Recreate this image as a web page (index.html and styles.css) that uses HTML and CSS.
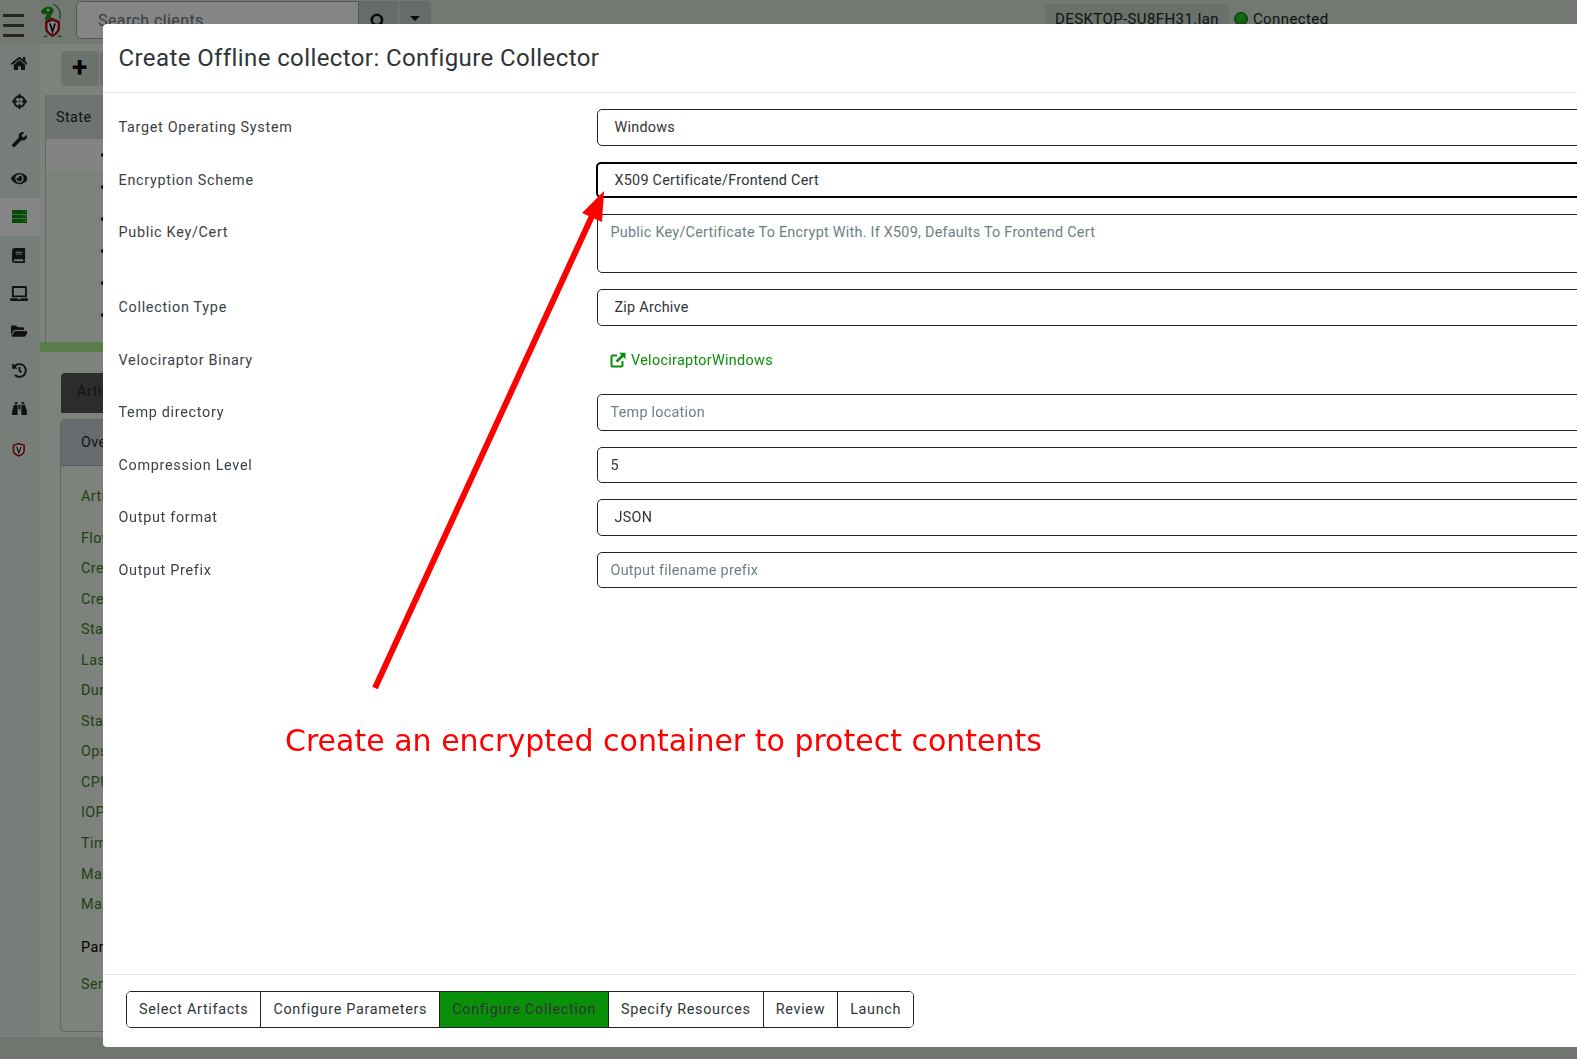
FILE: index.html
```html
<!DOCTYPE html>
<html lang="en">
<head>
    <meta charset="UTF-8">
    <title>Create Offline collector</title>
    <link rel="stylesheet" href="styles.css">
</head>
<body>
    <header class="topbar">
        <div class="burger"><span></span><span></span><span></span></div>
        <svg class="logo" viewBox="0 0 22 36">
            <path d="M13 1c5 2 8 7 7 15" fill="none" stroke="#0f8a0f" stroke-width="1.200"/>
            <path d="M1 9c1-4 6-6 10-5 3 1 3 4 2 6-1 1-2 2-2 4 1 1 2 2 2 3H5c0-3 1-5 2-6-3 1-5 0-6-2z" fill="#1c9a1c"/>
            <circle cx="8" cy="7" r="1.300" fill="#fff"/>
            <path d="M12.500 15l7.500 3v7c0 4-3.500 7-7.500 9-4-2-7.500-5-7.500-9v-7z" fill="#a8141a"/>
            <path d="M12.500 18l5 2v5c0 3-2.500 5-5 6.300-2.500-1.300-5-3.300-5-6.300v-5z" fill="#fff"/>
            <path d="M10 20.500l2.500 8 2.500-8" fill="none" stroke="#111" stroke-width="1.800"/>
            <path d="M3 34l3-2 2 2zM17 34l3-2 2 2z" fill="#1c9a1c"/>
        </svg>
        <div class="search">
            <div class="search-input">Search clients</div>
            <div class="search-btn">
                <svg viewBox="0 0 16 16"><circle cx="6.500" cy="6.500" r="4.800" fill="none" stroke="#111" stroke-width="2.400"/><path d="M10 10l5 5" stroke="#111" stroke-width="2.800"/></svg>
            </div>
            <div class="search-drop"><i></i></div>
        </div>
        <div class="status">
            <span class="host">DESKTOP-SU8FH31.lan</span>
            <span class="dot"></span>
            <span>Connected</span>
        </div>
    </header>

    <div class="page">
        <nav class="sidebar">
            <a><svg viewBox="0 0 576 512"><path d="M280 148L96 300v164c0 9 7 16 16 16l112-.3c9 0 16-7 16-16V368c0-9 7-16 16-16h64c9 0 16 7 16 16v96c0 9 7 16 16 16l112 .3c9 0 16-7 16-16V300L296 148c-4-3-12-3-16 0zM572 251l-84-69V44c0-7-5-12-12-12h-56c-7 0-12 5-12 12v72l-89-74c-18-14-43-14-61 0L4 251c-5 4-6 12-2 17l26 31c4 5 12 6 17 2L280 107c4-3 12-3 16 0l235 194c5 4 13 3 17-2l26-31c4-5 3-13-2-17z"/></svg></a>
            <a><svg viewBox="0 0 512 512"><path fill-rule="evenodd" d="M500 224h-30C456 138 374 56 288 42V12c0-7-5-12-12-12h-40c-7 0-12 5-12 12v30C138 56 56 138 42 224H12c-7 0-12 5-12 12v40c0 7 5 12 12 12h30c14 86 96 168 182 182v30c0 7 5 12 12 12h40c7 0 12-5 12-12v-30c86-14 168-96 182-182h30c7 0 12-5 12-12v-40c0-7-5-12-12-12zM288 404v-44c0-7-5-12-12-12h-40c-7 0-12 5-12 12v44c-51-12-96-57-108-116h44c7 0 12-5 12-12v-40c0-7-5-12-12-12h-44c12-59 57-104 108-116v44c0 7 5 12 12 12h40c7 0 12-5 12-12v-44c51 12 96 57 108 116h-44c-7 0-12 5-12 12v40c0 7 5 12 12 12h44c-12 59-57 104-108 116zM288 256a32 32 0 1 1-64 0 32 32 0 0 1 64 0z"/></svg></a>
            <a><svg viewBox="0 0 512 512"><path d="M507 109c-2-9-13-12-19-5l-74 74-68-11-11-68 74-74c7-7 3-17-6-19-48-12-100 1-137 38-40 40-50 98-31 147L20 406c-25 25-25 65 0 90s65 25 90 0l215-215c50 19 108 8 147-31 38-38 50-90 35-131z"/></svg></a>
            <a><svg viewBox="0 0 576 512"><path d="M572 241C518 135 410 64 288 64S58 135 4 241a32 32 0 0 0 0 30c54 106 162 177 284 177s230-71 284-177a32 32 0 0 0 0-30zM288 400a144 144 0 1 1 0-288 144 144 0 0 1 0 288zm0-240a95 95 0 0 0-25 4 48 48 0 0 1-67 67 96 96 0 1 0 92-71z"/></svg></a>
            <a class="active"><svg viewBox="0 0 512 512"><path class="green" d="M0 32h512v136H0zM0 188h512v136H0zM0 344h512v136H0z"/><path fill="#9fd09f" d="M390 64h36v40h-36zM450 64h36v40h-36zM390 220h36v40h-36zM450 220h36v40h-36zM390 376h36v40h-36zM450 376h36v40h-36z"/></svg></a>
            <a><svg viewBox="0 0 448 512"><path d="M448 360V24c0-13-11-24-24-24H96C43 0 0 43 0 96v320c0 53 43 96 96 96h328c13 0 24-11 24-24v-16c0-8-4-14-9-19-4-15-4-59 0-73 5-5 9-11 9-20zM128 134c0-3 3-6 6-6h212c3 0 6 3 6 6v20c0 3-3 6-6 6H134c-3 0-6-3-6-6v-20zm0 64c0-3 3-6 6-6h212c3 0 6 3 6 6v20c0 3-3 6-6 6H134c-3 0-6-3-6-6v-20zm253 250H96c-18 0-32-14-32-32s14-32 32-32h285c-2 17-2 47 0 64z"/></svg></a>
            <a><svg viewBox="0 0 640 512"><path d="M624 416H381c-1 20-15 32-33 32h-61c-18 0-32-17-32-32H16c-9 0-16 7-16 16v16c0 35 29 64 64 64h512c35 0 64-29 64-64v-16c0-9-7-16-16-16zM576 48c0-26-22-48-48-48H112C86 0 64 22 64 48v336h512V48zm-64 272H128V64h384v256z"/></svg></a>
            <a><svg viewBox="0 0 576 512"><path d="M573 279l-72 123c-12 19-35 30-55 30H48c-19 0-30-20-21-36l73-123c12-20 34-31 55-31h398c18 0 30 21 20 37zM155 208h293v-48c0-26-21-48-48-48H240l-64-64H48C21 48 0 69 0 96v278l69-119c18-29 51-47 86-47z"/></svg></a>
            <a><svg viewBox="0 0 512 512"><path d="M504 255c0 137-111 249-248 249-64 0-122-24-166-64-5-5-6-13-1-18l28-28c5-4 12-5 17-1 32 28 75 47 122 47 101 0 184-82 184-185S357 71 256 71c-51 0-96 21-130 54l51 51c8 8 2 21-8 21H17c-7 0-12-5-12-12V33c0-11 13-16 21-9l46 47C117 34 183 8 256 8c137 0 248 110 248 247zM325 334l10-13c7-10 5-24-5-31l-42-33V150c0-13-11-24-24-24h-16c-13 0-24 11-24 24v130l67 52c11 8 26 6 34 2z"/></svg></a>
            <a><svg viewBox="0 0 512 512"><path d="M416 48c0-9-7-16-16-16h-64c-9 0-16 7-16 16v48h96V48zM96 48c0-9 7-16 16-16h64c9 0 16 7 16 16v48H96V48zM0 416c0-40 8-90 22-140 14-50 42-100 42-148h128v336c0 9-7 16-16 16H16c-9 0-16-7-16-16v-48zm512 0c0-40-8-90-22-140-14-50-42-100-42-148H320v336c0 9 7 16 16 16h160c9 0 16-7 16-16v-48zM224 128h64v160h-64z"/></svg></a>
            <a class="shield"><svg viewBox="0 0 20 22"><path d="M10 1l9 3v8c0 5-4 8-9 9.500C5 20 1 17 1 12V4z" fill="#b01116"/><path d="M10 3.500l6.500 2v6.500c0 3.500-3 6-6.500 7-3.500-1-6.500-3.500-6.500-7V5.500z" fill="#fff"/><path d="M6.800 7l3.200 9 3.200-9" fill="none" stroke="#111" stroke-width="1.600"/></svg></a>
        </nav>

        <main class="content">
            <div class="toolbar"><div class="add-btn">+</div><div class="add-btn"></div></div>
            <div class="flow-table">
                <div class="table-head">State</div>
                <div class="table-row selected"><i></i></div>
                <div class="table-row"><i></i></div>
                <div class="table-row"><i></i></div>
                <div class="table-row"><i></i></div>
                <div class="table-row"><i></i></div>
                <div class="table-row"><i></i></div>
            </div>
            <div class="splitter"></div>
            <div class="tabs"><div class="tab">Artifact Collection</div></div>
            <section class="card">
                <div class="card-head">Overview</div>
                <dl class="facts">
                    <dt class="first">Artifact Names</dt>
                    <dt>Flow ID</dt>
                    <dt>Creator</dt>
                    <dt>Create Time</dt>
                    <dt>Start Time</dt>
                    <dt>Last Active</dt>
                    <dt>Duration</dt>
                    <dt>State</dt>
                    <dt>Ops/Sec</dt>
                    <dt>CPU Limit</dt>
                    <dt>IOPS Limit</dt>
                    <dt>Timeout</dt>
                    <dt>Max Rows</dt>
                    <dt>Max Bytes</dt>
                    <dt class="params">Parameters</dt>
                    <dt class="last">Server.Audit</dt>
                </dl>
            </section>
        </main>
    </div>

    <div class="backdrop"></div>

    <div class="modal">
        <div class="modal-header">Create Offline collector: Configure Collector</div>
        <div class="modal-body">
            <div class="form-row">
                <label>Target Operating System</label>
                <div class="control select">Windows</div>
            </div>
            <div class="form-row">
                <label>Encryption Scheme</label>
                <div class="control select focused">X509 Certificate/Frontend Cert</div>
            </div>
            <div class="form-row">
                <label>Public Key/Cert</label>
                <div class="control textarea">Public Key/Certificate To Encrypt With. If X509, Defaults To Frontend Cert</div>
            </div>
            <div class="form-row">
                <label>Collection Type</label>
                <div class="control select">Zip Archive</div>
            </div>
            <div class="form-row">
                <label>Velociraptor Binary</label>
                <a class="binary-link">
                    <svg viewBox="0 0 16 16"><path d="M7 3.500H2.500A1 1 0 0 0 1.500 4.500v9a1 1 0 0 0 1 1H11.500a1 1 0 0 0 1-1V9" fill="none" stroke="#0a8f0a" stroke-width="2"/><path d="M9 .7H15.500V7.200L13.200 4.900 7.500 10.600 5.600 8.700 11.300 3z" fill="#0a8f0a"/></svg>
                    VelociraptorWindows
                </a>
            </div>
            <div class="form-row">
                <label>Temp directory</label>
                <div class="control placeholder">Temp location</div>
            </div>
            <div class="form-row">
                <label>Compression Level</label>
                <div class="control">5</div>
            </div>
            <div class="form-row">
                <label>Output format</label>
                <div class="control select">JSON</div>
            </div>
            <div class="form-row">
                <label>Output Prefix</label>
                <div class="control placeholder">Output filename prefix</div>
            </div>
        </div>
        <div class="modal-footer">
            <div class="stepper">
                <button>Select Artifacts</button>
                <button>Configure Parameters</button>
                <button class="current">Configure Collection</button>
                <button>Specify Resources</button>
                <button>Review</button>
                <button>Launch</button>
            </div>
        </div>
    </div>

    <svg class="arrow" viewBox="0 0 1577 1059">
        <line x1="375" y1="688" x2="592" y2="216" stroke="#ff0000" stroke-width="6"/>
        <polygon points="604,191 602,222 582,213" fill="#ff0000"/>
    </svg>
    <div class="callout">Create an encrypted container to protect contents</div>
</body>
</html>
```

FILE: styles.css
```css
* {
    box-sizing: border-box;
}
html, body {
    height: 100%;
}
body {
    margin: 0;
    overflow: hidden;
    background-color: #d7e1d7;
    color: #212529;
    font-family: 'Roboto', sans-serif;
    font-size: 14.4px;
    letter-spacing: 0.4px;
}

/* page under the dialog */
.topbar {
    height: 44px;
    display: flex;
    align-items: flex-start;
    background-color: #dce6dc;
}
.burger {
    width: 40px;
    padding: 14px 16px 0 3px;
    display: flex;
    flex-direction: column;
    gap: 7px;
}
.burger span {
    height: 3px;
    background-color: #4a4a4a;
}
.logo {
    width: 22px;
    height: 36px;
    margin-top: 3px;
}
.search {
    display: flex;
    margin: 1px 0 0 14px;
    height: 38px;
}
.search-input {
    width: 283px;
    padding: 9px 21px;
    border: 1px solid #9aa;
    border-radius: 5px 0 0 5px;
    background-color: #fff;
    font-size: 16px;
    color: #6c757d;
}
.search-btn {
    width: 40px;
    background-color: #c8d0c8;
    border-right: 1px solid #e2ebe2;
    padding: 12px 11px;
}
.search-btn svg {
    width: 17px;
    height: 17px;
    display: block;
}
.search-drop {
    width: 32px;
    background-color: #c8d0c8;
    border-radius: 0 5px 5px 0;
    padding-top: 15px;
    padding-left: 11px;
}
.search-drop i {
    display: block;
    width: 0;
    border-left: 5px solid transparent;
    border-right: 5px solid transparent;
    border-top: 5px solid #111;
}
.status {
    display: flex;
    align-items: center;
    margin: 4px 0 0 614px;
    height: 30px;
    font-size: 15px;
    letter-spacing: 0.4px;
}
.host {
    padding: 0 10px;
    height: 30px;
    line-height: 30px;
    background-color: #ccd6cc;
    border-radius: 4px;
}
.dot {
    width: 14px;
    height: 14px;
    margin: 0 5px;
    border-radius: 50%;
    background: radial-gradient(circle at 50% 35%, #2fdc2f, #0a8f0a);
    border: 1px solid #0a6a0a;
}
.page {
    display: flex;
    height: 993px;
}
.sidebar {
    width: 40px;
    background-color: #e5f0e7;
}
.sidebar a {
    display: flex;
    align-items: center;
    justify-content: center;
    height: 38.4px;
    padding-right: 2px;
}
.sidebar a.active {
    background-color: #ffffff;
}
.sidebar svg {
    width: auto;
    height: 15px;
    fill: #222;
}
.sidebar .green {
    fill: #0a8f0a;
}
.sidebar .shield {
    margin-top: 2px;
}
.content {
    flex: 1;
    background-color: #f0faf0;
}
.toolbar {
    height: 51px;
    padding: 7px 0 0 21px;
    display: flex;
    gap: 1px;
}
.add-btn {
    width: 38px;
    height: 35px;
    background-color: #d0dad0;
    border-radius: 4px 0 0 4px;
    font-size: 28px;
    font-weight: bold;
    line-height: 33px;
    padding-left: 11px;
    color: #000;
}
.flow-table {
    margin-left: 5px;
    border-left: 1px solid #c4ccc4;
    height: 247px;
}
.table-head {
    height: 44px;
    line-height: 46px;
    padding-left: 10px;
    background-color: #d4ddd7;
}
.table-row {
    height: 32px;
    position: relative;
}
.table-row.selected {
    background-color: #fcfcfc;
}
.table-row i {
    position: absolute;
    left: 55px;
    top: 14px;
    width: 4px;
    height: 4px;
    background-color: #000;
    border-radius: 50%;
}
.splitter {
    height: 10px;
    background-color: #adf08f;
}
.tabs {
    height: 67px;
    padding: 21px 0 0 21px;
}
.tab {
    width: 200px;
    height: 40px;
    padding: 10px 16px;
    background-color: #555555;
    border-radius: 4px 4px 0 0;
}
.card {
    margin-left: 20px;
    border: 1px solid #bcc4bc;
    border-radius: 4px;
    height: 613px;
}
.card-head {
    height: 46px;
    line-height: 46px;
    padding-left: 20px;
    background-color: #c5d2d4;
    border-bottom: 1px solid #aab;
}
.facts {
    margin: 0;
    padding-left: 20px;
}
.facts dt {
    height: 30.550px;
    line-height: 30.550px;
    color: #3f7d2a;
}
.facts .first {
    margin-top: 16px;
    margin-bottom: 11px;
}
.facts .params {
    margin-top: 12px;
    color: #000;
}
.facts .last {
    margin-top: 7px;
}
.backdrop {
    position: fixed;
    inset: 0;
    background-color: rgba(0, 0, 0, 0.48);
}

/* dialog */
.modal {
    position: absolute;
    left: 103px;
    top: 24px;
    width: 1600px;
    height: 1023px;
    display: flex;
    flex-direction: column;
    background-color: #fff;
    border-radius: 4px;
    color: #2f3438;
}
.modal-header {
    height: 69px;
    padding: 17px 15.500px;
    font-size: 24px;
    line-height: 34px;
    border-bottom: 1px solid #dee6e6;
}
.modal-body {
    flex: 1;
    padding: 16px 15.500px;
}
.form-row {
    display: flex;
    margin-bottom: 16px;
}
.form-row label {
    width: 478.500px;
    padding-top: 9px;
    line-height: 20px;
    color: #3a3f44;
    letter-spacing: 0.7px;
}
.control {
    flex: 1;
    height: 36.500px;
    padding: 7px 12.500px;
    line-height: 21px;
    letter-spacing: 0.25px;
    border: 1px solid #212529;
    border-radius: 5px;
}
.select {
    padding-left: 16.500px;
}
.focused {
    margin-left: -1px;
    border-width: 2px;
    border-color: #000;
    padding-top: 6px;
    padding-left: 16.500px;
}
.textarea {
    height: 59px;
    color: #6c7f85;
}
.placeholder {
    color: #6c7f85;
}
.binary-link {
    display: flex;
    align-items: center;
    gap: 5px;
    height: 36.500px;
    padding-top: 2px;
    padding-left: 13px;
    color: #0a8f0a;
    letter-spacing: 0.3px;
}
.binary-link svg {
    width: 16px;
    height: 16px;
    margin-top: -2px;
}
.modal-footer {
    height: 73px;
    padding: 16px 23px;
    border-top: 1px solid #dee6e6;
}
.stepper {
    display: inline-flex;
    height: 37px;
    border: 1px solid #212529;
    border-radius: 5px;
    overflow: hidden;
}
.stepper button {
    padding: 0 12px;
    border: none;
    border-left: 1px solid #212529;
    background-color: #fff;
    color: #2f3438;
    font-family: inherit;
    font-size: 14.4px;
    letter-spacing: 0.685px;
}
.stepper button:first-child {
    border-left: none;
}
.stepper .current {
    background-color: #0a8f0a;
}

/* red annotation drawn on top of the shot */
.arrow {
    position: absolute;
    left: 0;
    top: 0;
    width: 1577px;
    height: 1059px;
    pointer-events: none;
}
.callout {
    position: absolute;
    left: 285px;
    top: 721px;
    color: #ff0000;
    font-family: 'DejaVu Sans', sans-serif;
    font-size: 30px;
    letter-spacing: 0;
    line-height: 40px;
    white-space: nowrap;
}
```
